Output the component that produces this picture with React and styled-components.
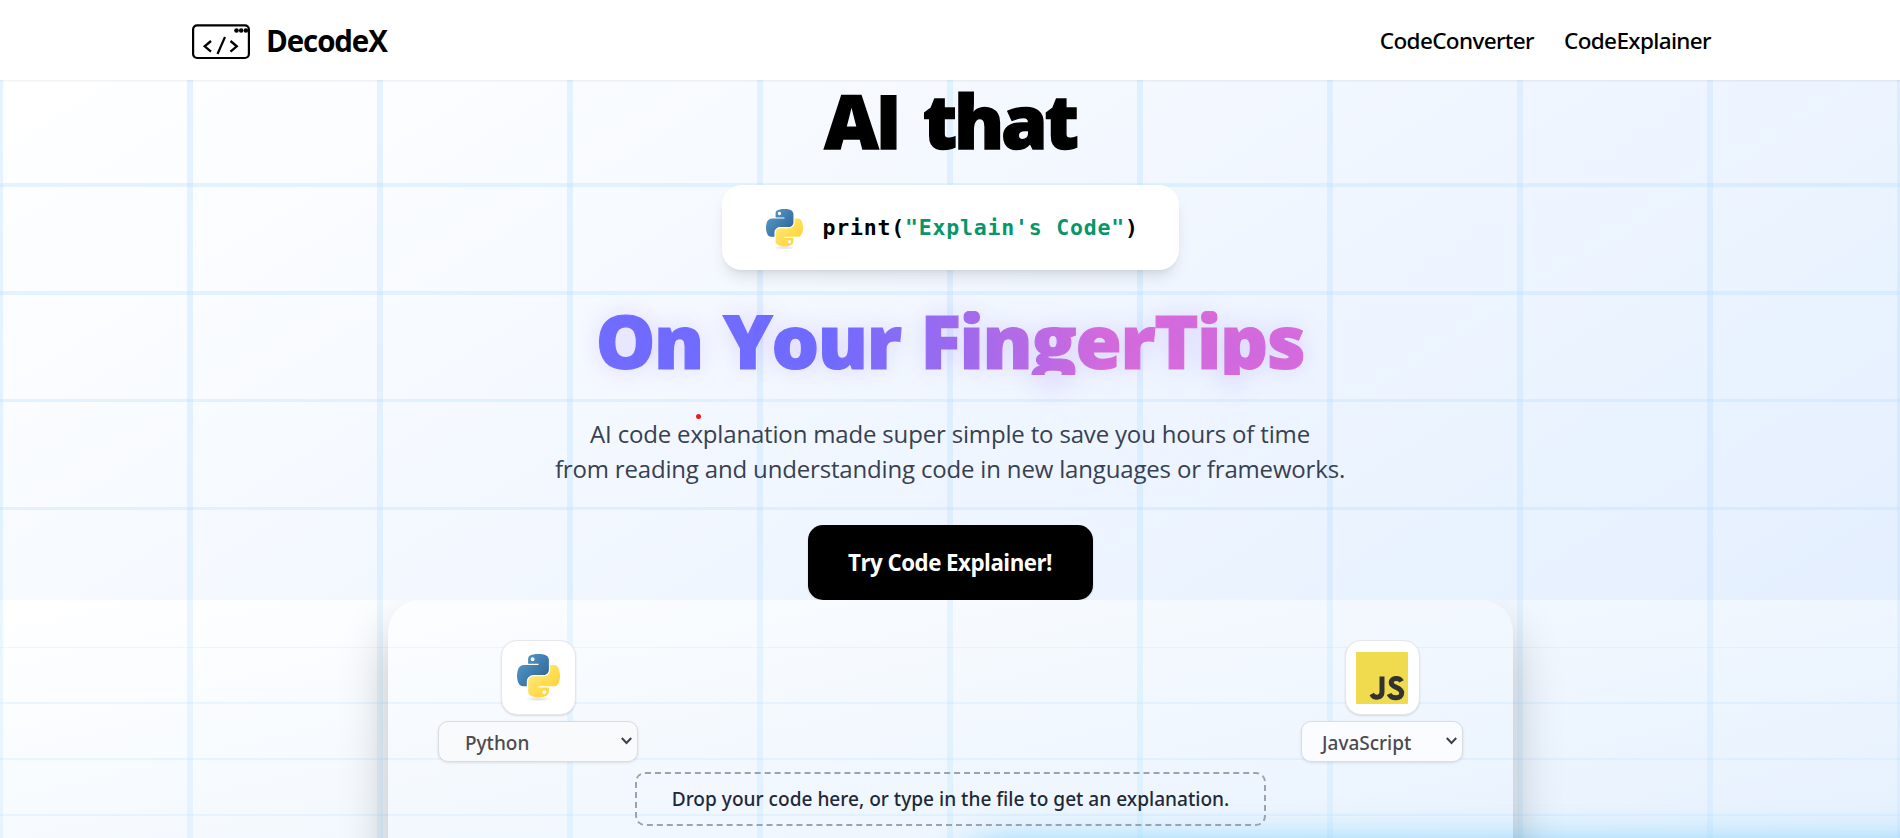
import React from 'react';
import styled, { createGlobalStyle } from 'styled-components';

const Global = createGlobalStyle`
  *, *::before, *::after { box-sizing: border-box; }
  html, body { margin: 0; height: 100%; overflow: hidden; }
  body { font-family: "Noto Sans", "Open Sans", sans-serif; color: #000; background: #fff; }
  h1, h2, p { margin: 0; }
`;

const display = '"Open Sans", "Noto Sans", sans-serif';

const Page = styled.div`
  height: 838px;
  overflow: hidden;
  display: flex;
  flex-direction: column;
`;

const Header = styled.header`
  height: 80px;
  flex: none;
  padding: 0 189px 0 192px;
  display: flex;
  align-items: center;
  justify-content: space-between;
  background: #fff;
  box-shadow: 0 1px 2px rgba(0, 0, 0, 0.07);
  position: relative;
  z-index: 2;
`;

const Brand = styled.div`
  display: flex;
  align-items: center;
  gap: 15px;
  font-family: ${display};
  font-size: 29.5px;
  font-weight: 700;
  letter-spacing: -1.1px;
  svg { margin-top: 3px; }
`;

const Nav = styled.nav`
  display: flex;
  gap: 30px;
  font-size: 22.5px;
  font-weight: 500;
  letter-spacing: -0.63px;
`;

const Hero = styled.section`
  height: 520px;
  flex: none;
  display: flex;
  flex-direction: column;
  align-items: center;
  background:
    repeating-linear-gradient(90deg, rgba(186, 224, 255, 0.36) 0 2.7px, transparent 2.7px 187.3px, rgba(186, 224, 255, 0.36) 187.3px 190px),
    repeating-linear-gradient(180deg, rgba(186, 224, 255, 0.36) 0 3.6px, transparent 3.6px 107.9px) 0 -4.9px / 100% 540px,
    linear-gradient(148deg, #fff 0%, #e4efff 100%);
`;

const Title = styled.h1`
  margin-top: 8px;
  font-family: ${display};
  font-size: 75px;
  line-height: 64px;
  font-weight: 800;
  letter-spacing: -3.2px;
  word-spacing: 8px;
  -webkit-text-stroke: 1.4px #000;
`;

const Snippet = styled.div`
  width: 457px;
  height: 85px;
  margin-top: 33px;
  padding-left: 44px;
  display: flex;
  align-items: center;
  gap: 20px;
  border-radius: 20px;
  background: #fff;
  box-shadow: 0 10px 15px -3px rgba(0, 0, 0, 0.1), 0 4px 6px -4px rgba(0, 0, 0, 0.1);
  svg { margin-top: 3px; }
`;

const Code = styled.code`
  font: 700 21.5px "DejaVu Sans Mono", monospace;
  letter-spacing: 0.8px;
  white-space: pre;
`;

const Str = styled.span`
  color: #059669;
`;

const Gradient = styled.h2`
  margin-top: 41px;
  padding-bottom: 6px;
  font-family: ${display};
  font-size: 75px;
  line-height: 58px;
  font-weight: 800;
  letter-spacing: -1.4px;
  word-spacing: 2px;
  color: transparent;
  -webkit-text-stroke: 1.2px transparent;
  background: linear-gradient(90deg, #6e6eff 33%, #dc6dda 72%);
  background-clip: text;
  -webkit-background-clip: text;
  text-shadow: 0 0 24px rgba(139, 92, 246, 0.22);
`;

const Lead = styled.p`
  position: relative;
  margin-top: 41px;
  text-align: center;
  font-family: ${display};
  font-size: 24px;
  line-height: 35px;
  letter-spacing: -0.17px;
  color: #374151;
`;

const Dot = styled.i`
  position: absolute;
  left: 141px;
  top: -2px;
  width: 5px;
  height: 5px;
  border-radius: 50%;
  background: #f01818;
`;

const Cta = styled.button`
  width: 285px;
  height: 75px;
  margin-top: 39px;
  border: 0;
  border-radius: 15px;
  background: #000;
  color: #fff;
  font: 700 22.3px ${display};
  letter-spacing: -0.5px;
  white-space: nowrap;
  box-shadow: 0 1px 2px rgba(0, 0, 0, 0.15);
`;

const Demo = styled.section`
  position: relative;
  overflow: hidden;
  flex: 1;
  display: flex;
  justify-content: center;
  background:
    repeating-linear-gradient(90deg, rgba(186, 228, 255, 0.3) 0 2.7px, transparent 2.7px 187.3px, rgba(186, 228, 255, 0.3) 187.3px 190px),
    repeating-linear-gradient(180deg, rgba(186, 224, 255, 0.26) 0 1.7px, transparent 1.7px 55.75px) 0 -9px / 100% 300px,
    linear-gradient(167deg, #fff 0%, #e6f1fe 100%);
`;

const Glow = styled.div`
  position: absolute;
  left: 945px;
  right: -200px;
  top: 243px;
  height: 200px;
  border-radius: 60px;
  background: #7dd3fc;
  filter: blur(18px);
`;

const Panel = styled.div`
  position: relative;
  width: 1125px;
  height: 560px;
  margin-left: 1px;
  flex: none;
  padding: 40px 50px 0;
  border-radius: 32px;
  box-shadow: 0 25px 50px -3px rgba(0, 0, 0, 0.25);
`;

const Row = styled.div`
  display: flex;
  justify-content: space-between;
`;

const Picker = styled.div`
  display: flex;
  flex-direction: column;
  align-items: center;
  gap: 6px;
`;

const Tile = styled.div`
  width: 75px;
  height: 75px;
  display: flex;
  align-items: center;
  justify-content: center;
  border: 1px solid #e5e7eb;
  border-radius: 16px;
  background: #fff;
  box-shadow: 0 1px 2px rgba(0, 0, 0, 0.12);
`;

const Select = styled.div`
  width: ${(p) => p.$width}px;
  height: 41px;
  padding: 3px 5px 0 ${(p) => p.$pad}px;
  display: flex;
  align-items: center;
  justify-content: space-between;
  border: 1px solid #d9dde3;
  border-radius: 10px;
  background: ${(p) => p.$bg};
  color: #4a4b4e;
  font-size: 19px;
  font-weight: 500;
  box-shadow: 0 1px 3px rgba(0, 0, 0, 0.1);
  svg { margin-top: -4px; }
`;

const Drop = styled.div`
  width: 631px;
  height: 54px;
  margin: 10px auto 0;
  display: flex;
  align-items: center;
  justify-content: center;
  border: 2px dashed #9ca3af;
  border-radius: 10px;
  color: #1f2937;
  font-size: 19.1px;
  font-weight: 500;
  white-space: nowrap;
`;

const Mark = () => (
  <svg width="59" height="36" viewBox="0 0 59 36" fill="none" stroke="#000">
    <rect x="1.1" y="1.3" width="55.8" height="32.7" rx="4" strokeWidth="2.2" />
    <path d="M19 17l-6.3 5.3L19 27.600M38.500 17l6.300 5.300-6.300 5.300" strokeWidth="2.3" />
    <path d="M33 13l-7.500 17" strokeWidth="2.2" />
    <g fill="#000" stroke="none"><circle cx="44.500" cy="6.500" r="2.300" /><circle cx="49.200" cy="6.500" r="2.300" /><circle cx="53.900" cy="6.500" r="2.300" /></g>
  </svg>
);

const Python = ({ size, id }) => (
  <svg width={size} height={size * 1.1} viewBox="0 0 111 122">
    <defs>
      <linearGradient id={id + 'b'} x1="0" y1="0" x2="0.85" y2="0.8"><stop stopColor="#5a9fd4" /><stop offset="1" stopColor="#306998" /></linearGradient>
      <linearGradient id={id + 'y'} x1="0.2" y1="0.2" x2="0.75" y2="0.8"><stop stopColor="#ffe873" /><stop offset="1" stopColor="#ffd43b" /></linearGradient>
      <radialGradient id={id + 's'}><stop stopColor="#b8b8b8" stopOpacity=".4" /><stop offset="1" stopColor="#7f7f7f" stopOpacity="0" /></radialGradient>
    </defs>
    <ellipse cx="55" cy="116" rx="33" ry="6" fill={`url(#${id}s)`} />
    <path fill={`url(#${id}b)`} d="M54.919 0c-4.584.022-8.961.413-12.813 1.095C30.760 3.099 28.700 7.295 28.700 15.032v10.219h26.813v3.406H18.638c-7.793 0-14.616 4.684-16.750 13.594-2.462 10.213-2.571 16.586 0 27.250 1.906 7.938 6.458 13.594 14.250 13.594h9.219V70.845c0-8.850 7.657-16.656 16.750-16.656h26.781c7.455 0 13.406-6.138 13.406-13.625v-25.532c0-7.266-6.130-12.725-13.406-13.937C64.282.328 59.502-.020 54.919 0zM40.419 8.220c2.770 0 5.031 2.298 5.031 5.125 0 2.816-2.262 5.093-5.031 5.093-2.779 0-5.031-2.277-5.031-5.093 0-2.827 2.252-5.125 5.031-5.125z" />
    <path fill={`url(#${id}y)`} d="M85.638 28.657v11.906c0 9.231-7.826 17-16.750 17H42.106c-7.336 0-13.406 6.278-13.406 13.625v25.531c0 7.266 6.319 11.540 13.406 13.625 8.488 2.495 16.627 2.946 26.782 0 6.750-1.955 13.406-5.888 13.406-13.625V86.501H55.513v-3.405H95.700c7.793 0 10.696-5.436 13.406-13.594 2.800-8.399 2.681-16.476 0-27.250-1.925-7.758-5.604-13.594-13.406-13.594zM70.575 93.313c2.780 0 5.031 2.277 5.031 5.093 0 2.827-2.252 5.125-5.031 5.125-2.769 0-5.031-2.298-5.031-5.125 0-2.816 2.261-5.093 5.031-5.093z" />
  </svg>
);

const Js = () => (
  <svg width="52" height="52" viewBox="0 0 52 52">
    <rect width="52" height="52" rx="1" fill="#f0db4f" />
    <g fill="none" stroke="#323330" strokeWidth="5">
      <path d="M26 24.500V40c0 6-7.500 7-10.300 2" />
      <path d="M45.500 29.300c-2-4-10.300-4-10.300 1.200 0 5.800 10.500 4 10.500 10.500 0 6-10 6.500-12.700 1" />
    </g>
  </svg>
);

const Chevron = () => (
  <svg width="11" height="8" viewBox="0 0 11 8" fill="none" stroke="#3f4145" strokeWidth="2"><path d="M.8 1l4.700 5L10.200 1" /></svg>
);

export default function App() {
  return (
    <Page>
      <Global />
      <Header>
        <Brand><Mark />DecodeX</Brand>
        <Nav><span>CodeConverter</span><span>CodeExplainer</span></Nav>
      </Header>
      <Hero>
        <Title>AI that</Title>
        <Snippet>
          <Python size={37} id="s" />
          <Code>print(<Str>"Explain's Code"</Str>)</Code>
        </Snippet>
        <Gradient>On Your FingerTips</Gradient>
        <Lead>
          <Dot />
          AI code explanation made super simple to save you hours of time<br />
          from reading and understanding code in new languages or frameworks.
        </Lead>
        <Cta>Try Code Explainer!</Cta>
      </Hero>
      <Demo>
        <Glow />
        <Panel>
          <Row>
            <Picker>
              <Tile><Python size={43} id="t" /></Tile>
              <Select $width={200} $pad={26} $bg="#f9fafb">Python<Chevron /></Select>
            </Picker>
            <Picker>
              <Tile><Js /></Tile>
              <Select $width={162} $pad={20} $bg="#fbfcff">JavaScript<Chevron /></Select>
            </Picker>
          </Row>
          <Drop>Drop your code here, or type in the file to get an explanation.</Drop>
        </Panel>
      </Demo>
    </Page>
  );
}
